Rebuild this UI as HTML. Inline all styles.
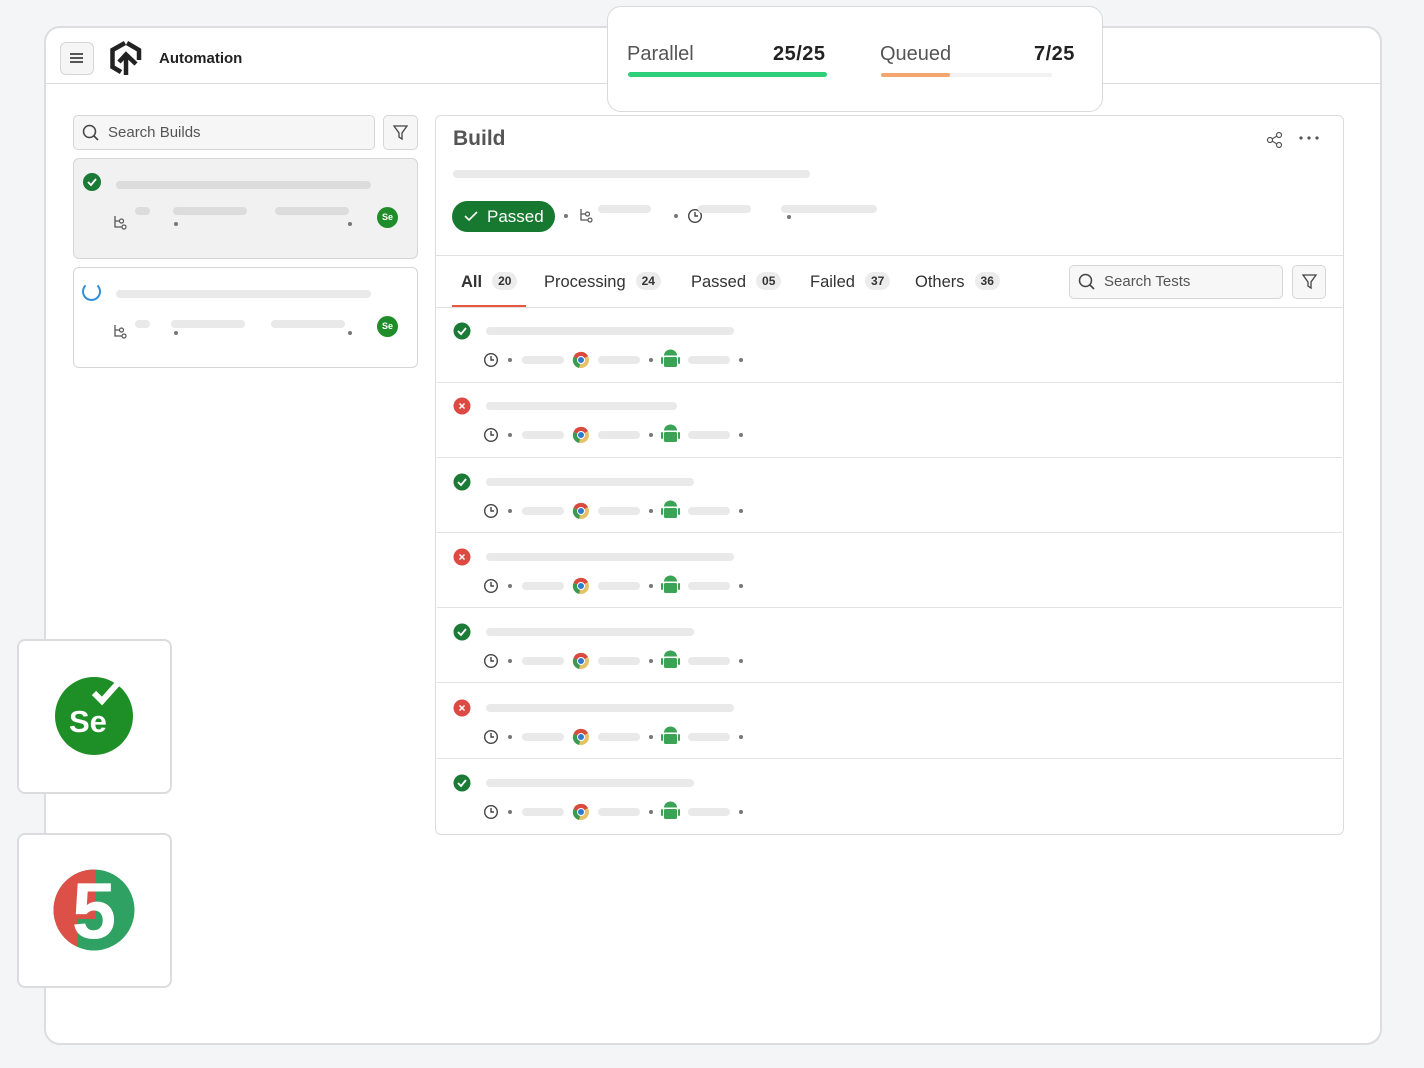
<!DOCTYPE html>
<html><head><meta charset="utf-8"><style>
*{box-sizing:border-box;margin:0;padding:0}
body{width:1424px;height:1068px;background:#f4f5f6;font-family:"Liberation Sans",sans-serif;position:relative;overflow:hidden}
.a{position:absolute}
.bar{position:absolute;height:8px;border-radius:4px;background:#e9e9ea}
.dot{position:absolute;width:4px;height:4px;border-radius:50%;background:#777}
.card{position:absolute;background:#fff;border:2px solid #dcdcde;border-radius:8px}
.row{position:absolute;left:0;width:905px;height:75px;border-bottom:1.5px solid #e3e3e4}
.cnt{display:inline-block;background:#ececec;border-radius:10px;font-size:12px;font-weight:bold;color:#333;padding:2px 6px;margin-left:10px;vertical-align:2px}
.tab{position:absolute;top:272px;font-size:16.5px;color:#333}
</style></head><body>
<svg width="0" height="0" style="position:absolute"><defs>
<g id="br"><path d="M2 1 V12 H9 M2 6 H6" fill="none" stroke="#555" stroke-width="1.3"/><circle cx="8.5" cy="6" r="2" fill="#fff" stroke="#555" stroke-width="1.2"/><circle cx="11" cy="12" r="2" fill="#fff" stroke="#555" stroke-width="1.2"/></g>
</defs></svg>
<!-- main window -->
<div class="a" style="left:44px;top:26px;width:1338px;height:1019px;background:#fff;border:2px solid #dddde0;border-radius:16px"></div>
<div class="a" style="left:45px;top:83px;width:1336px;height:1px;background:#dcdcde"></div>
<div class="a" style="left:60px;top:42px;width:34px;height:33px;border:1px solid #d6d6d8;border-radius:6px;background:#f5f5f6"></div>
<div class="a" style="left:70px;top:53px;width:13px;height:1.5px;background:#555;box-shadow:0 4px 0 #555,0 8px 0 #555"></div>
<svg class="a" style="left:108px;top:40px" width="36" height="36" viewBox="0 0 36 36"><path d="M13 32 L4.5 27 V10 L17 3" fill="none" stroke="#222" stroke-width="4.5"/><path d="M19 3 L31 10 V20" fill="none" stroke="#222" stroke-width="4.5"/><path d="M18 35 V15 M11 22 L18 14.5 L28 24" fill="none" stroke="#222" stroke-width="4.5"/></svg>
<div class="a" style="left:159px;top:50px;font-size:15px;font-weight:bold;color:#222">Automation</div>

<!-- left -->
<div class="a" style="left:73px;top:115px;width:302px;height:35px;border:1px solid #d6d6d8;border-radius:5px;background:#f6f6f7"></div>
<svg class="a" style="left:82px;top:124px" width="18" height="18"><circle cx="7.5" cy="7.5" r="6" fill="none" stroke="#444" stroke-width="1.5"/><path d="M12 12 L16 16" stroke="#444" stroke-width="1.6"/></svg>
<div class="a" style="left:108px;top:124px;font-size:15px;color:#555">Search Builds</div>
<div class="a" style="left:383px;top:115px;width:35px;height:35px;border:1px solid #d6d6d8;border-radius:5px;background:#f6f6f7"></div>
<svg class="a" style="left:392px;top:124px" width="17" height="17"><path d="M2 2 H15 L10 9 V15 L7 13 V9 Z" fill="none" stroke="#444" stroke-width="1.3"/></svg>

<div class="a" style="left:73px;top:158px;width:345px;height:101px;border:1px solid #d6d6d8;border-radius:6px;background:#f1f1f2"></div>
<svg class="a" style="left:83px;top:173px" width="18" height="18"><circle cx="9" cy="9" r="9" fill="#1a7a36"/><path d="M5 9 L8 12 L13 6" fill="none" stroke="#fff" stroke-width="1.8"/></svg>
<div class="bar" style="left:116px;top:181px;width:255px;background:#dcdcdc"></div>
<div class="bar" style="left:135px;top:207px;width:15px;background:#dcdcdc"></div>
<div class="bar" style="left:173px;top:207px;width:74px;background:#dcdcdc"></div>
<div class="bar" style="left:275px;top:207px;width:74px;background:#dcdcdc"></div>
<div class="dot" style="left:174px;top:222px"></div><div class="dot" style="left:348px;top:222px"></div>
<svg class="a" style="left:113px;top:215px" width="15" height="16"><use href="#br"/></svg>
<div class="a" style="left:377px;top:207px;width:21px;height:21px;border-radius:50%;background:#1f8d2a;color:#fff;font-size:9px;font-weight:bold;text-align:center;line-height:21px">Se</div>

<div class="a" style="left:73px;top:267px;width:345px;height:101px;border:1px solid #d6d6d8;border-radius:6px;background:#fff"></div>
<div class="a" style="left:82px;top:282px;width:19px;height:19px;border-radius:50%;border:2px solid #2f8fd8;border-top-color:transparent"></div>
<div class="bar" style="left:116px;top:290px;width:255px"></div>
<div class="bar" style="left:135px;top:320px;width:15px"></div>
<div class="bar" style="left:171px;top:320px;width:74px"></div>
<div class="bar" style="left:271px;top:320px;width:74px"></div>
<div class="dot" style="left:174px;top:331px"></div><div class="dot" style="left:348px;top:331px"></div>
<svg class="a" style="left:113px;top:324px" width="15" height="16"><use href="#br"/></svg>
<div class="a" style="left:377px;top:316px;width:21px;height:21px;border-radius:50%;background:#1f8d2a;color:#fff;font-size:9px;font-weight:bold;text-align:center;line-height:21px">Se</div>

<!-- build panel -->
<div class="a" style="left:435px;top:115px;width:909px;height:720px;border:1.5px solid #dcdcde;border-radius:6px;background:#fff"></div>
<div class="a" style="left:453px;top:127px;font-size:21px;font-weight:bold;color:#555">Build</div>
<svg class="a" style="left:1266px;top:131px" width="18" height="18"><circle cx="4" cy="9" r="2.5" fill="none" stroke="#555" stroke-width="1.2"/><circle cx="13" cy="4" r="2.5" fill="none" stroke="#555" stroke-width="1.2"/><circle cx="13" cy="14" r="2.5" fill="none" stroke="#555" stroke-width="1.2"/><path d="M6 8 L11 5 M6 10 L11 13" stroke="#555" stroke-width="1.2"/></svg>
<svg class="a" style="left:1298px;top:134px" width="22" height="8"><circle cx="3" cy="4" r="1.6" fill="#555"/><circle cx="11" cy="4" r="1.6" fill="#555"/><circle cx="19" cy="4" r="1.6" fill="#555"/></svg>
<div class="bar" style="left:453px;top:170px;width:357px"></div>
<div class="a" style="left:452px;top:201px;width:103px;height:31px;border-radius:16px;background:#17782f;color:#fff;font-size:17px;line-height:31px;padding-left:35px">Passed</div>
<svg class="a" style="left:463px;top:209px" width="16" height="14"><path d="M2 7 L6 11 L14 3" fill="none" stroke="#fff" stroke-width="1.6"/></svg>
<div class="dot" style="left:564px;top:214px"></div>
<svg class="a" style="left:579px;top:208px" width="15" height="16"><use href="#br"/></svg>
<div class="bar" style="left:598px;top:205px;width:53px"></div>
<div class="dot" style="left:674px;top:214px"></div>
<svg class="a" style="left:687px;top:208px" width="16" height="16"><circle cx="8" cy="8" r="6.3" fill="none" stroke="#444" stroke-width="1.4"/><path d="M8 4 V8 H11" fill="none" stroke="#444" stroke-width="1.4"/></svg>
<div class="bar" style="left:698px;top:205px;width:53px"></div>
<div class="bar" style="left:781px;top:205px;width:96px"></div>
<div class="dot" style="left:787px;top:215px"></div>
<div class="a" style="left:436px;top:255px;width:907px;height:1px;background:#e0e0e2"></div>
<div class="a" style="left:436px;top:307px;width:907px;height:1px;background:#e0e0e2"></div>
<div class="a" style="left:452px;top:305px;width:74px;height:2px;background:#e8563f"></div>
<div class="tab" style="left:461px;font-weight:bold">All<span class="cnt">20</span></div>
<div class="tab" style="left:544px">Processing<span class="cnt">24</span></div>
<div class="tab" style="left:691px">Passed<span class="cnt">05</span></div>
<div class="tab" style="left:810px">Failed<span class="cnt">37</span></div>
<div class="tab" style="left:915px">Others<span class="cnt">36</span></div>
<div class="a" style="left:1069px;top:265px;width:214px;height:34px;border:1px solid #d6d6d8;border-radius:5px;background:#f7f7f8"></div>
<svg class="a" style="left:1078px;top:273px" width="18" height="18"><circle cx="7.5" cy="7.5" r="6" fill="none" stroke="#444" stroke-width="1.5"/><path d="M12 12 L16 16" stroke="#444" stroke-width="1.6"/></svg>
<div class="a" style="left:1104px;top:273px;font-size:15px;color:#555">Search Tests</div>
<div class="a" style="left:1292px;top:265px;width:34px;height:34px;border:1px solid #d6d6d8;border-radius:5px;background:#f7f7f8"></div>
<svg class="a" style="left:1301px;top:273px" width="17" height="17"><path d="M2 2 H15 L10 9 V15 L7 13 V9 Z" fill="none" stroke="#444" stroke-width="1.3"/></svg>

<div class="a" style="left:437px;top:308px">
<div class="row" style="top:0"></div><div class="row" style="top:75px"></div><div class="row" style="top:150px"></div><div class="row" style="top:225px"></div><div class="row" style="top:300px"></div><div class="row" style="top:376px"></div><div class="row" style="top:451px;border:none"></div>
</div>
<svg class="a" style="left:436px;top:308px" width="340" height="526">
<defs>
<g id="ok"><circle r="8.5" fill="#1a7a36"/><path d="M-4 0 L-1 3 L4 -3" fill="none" stroke="#fff" stroke-width="1.8"/></g>
<g id="ko"><circle r="8.5" fill="#dd4a43"/><path d="M-2.5 -2.5 L2.5 2.5 M2.5 -2.5 L-2.5 2.5" stroke="#fff" stroke-width="1.5"/></g>
<g id="meta">
<circle cx="55" cy="52" r="6.3" fill="none" stroke="#444" stroke-width="1.4"/><path d="M55 48 V52 H58" fill="none" stroke="#444" stroke-width="1.4"/>
<circle cx="74" cy="52" r="2" fill="#777"/>
<rect x="86" y="48" width="42" height="8" rx="4" fill="#e9e9ea"/>
<circle cx="145" cy="52" r="8" fill="#e5c26a"/><path d="M145 52 L137.5 49 A8 8 0 0 1 152 48 Z" fill="#d8493e"/><path d="M145 52 L137.5 49 A8 8 0 0 0 143 60 Z" fill="#3c9a4f"/><circle cx="145" cy="52" r="3.5" fill="#2e7ad1" stroke="#fff"/>
<rect x="162" y="48" width="42" height="8" rx="4" fill="#e9e9ea"/>
<circle cx="215" cy="52" r="2" fill="#777"/>
<rect x="228" y="49" width="13" height="10" rx="1.5" fill="#3aa356"/><path d="M228 47.5 A6.5 6 0 0 1 241 47.5 Z" fill="#3aa356"/><rect x="225" y="49" width="2" height="7" rx="1" fill="#3aa356"/><rect x="242" y="49" width="2" height="7" rx="1" fill="#3aa356"/>
<rect x="252" y="48" width="42" height="8" rx="4" fill="#e9e9ea"/>
<circle cx="305" cy="52" r="2" fill="#777"/>
</g>
</defs>
<g transform="translate(0,0)"><use href="#ok" x="26" y="23"/><rect x="50" y="19" width="248" height="8" rx="4" fill="#e9e9ea"/><use href="#meta"/></g>
<g transform="translate(0,75)"><use href="#ko" x="26" y="23"/><rect x="50" y="19" width="191" height="8" rx="4" fill="#e9e9ea"/><use href="#meta"/></g>
<g transform="translate(0,151)"><use href="#ok" x="26" y="23"/><rect x="50" y="19" width="208" height="8" rx="4" fill="#e9e9ea"/><use href="#meta"/></g>
<g transform="translate(0,226)"><use href="#ko" x="26" y="23"/><rect x="50" y="19" width="248" height="8" rx="4" fill="#e9e9ea"/><use href="#meta"/></g>
<g transform="translate(0,301)"><use href="#ok" x="26" y="23"/><rect x="50" y="19" width="208" height="8" rx="4" fill="#e9e9ea"/><use href="#meta"/></g>
<g transform="translate(0,377)"><use href="#ko" x="26" y="23"/><rect x="50" y="19" width="248" height="8" rx="4" fill="#e9e9ea"/><use href="#meta"/></g>
<g transform="translate(0,452)"><use href="#ok" x="26" y="23"/><rect x="50" y="19" width="208" height="8" rx="4" fill="#e9e9ea"/><use href="#meta"/></g>
</svg>

<!-- parallel popup -->
<div class="a" style="left:607px;top:6px;width:496px;height:106px;background:#fff;border:1.5px solid #d9d9dc;border-radius:14px"></div>
<div class="a" style="left:627px;top:43px;font-size:20px;color:#555">Parallel</div>
<div class="a" style="left:773px;top:43px;font-size:20px;color:#222;font-weight:bold;letter-spacing:0.5px">25/25</div>
<div class="a" style="left:628px;top:72px;width:199px;height:5px;border-radius:3px;background:#2dcf78"></div>
<div class="a" style="left:880px;top:43px;font-size:20px;color:#555">Queued</div>
<div class="a" style="left:1034px;top:43px;font-size:20px;color:#222;font-weight:bold;letter-spacing:0.5px">7/25</div>
<div class="a" style="left:881px;top:73px;width:171px;height:4px;border-radius:2px;background:#f2f2f2"></div>
<div class="a" style="left:881px;top:73px;width:69px;height:4px;border-radius:2px;background:#f4a46e"></div>

<!-- side logos -->
<div class="card" style="left:17px;top:639px;width:155px;height:155px;border-radius:8px"></div>
<svg class="a" style="left:54px;top:676px" width="82" height="82" viewBox="0 0 82 82"><circle cx="40" cy="40" r="39" fill="#1e8e26"/><path d="M57 2 L76 2 L76 20 Z" fill="#fff"/><path d="M40 17 L48 25 L65 6" fill="none" stroke="#fff" stroke-width="6"/><text x="15" y="56" font-family="Liberation Sans" font-weight="bold" font-size="31" fill="#fff">Se</text></svg>
<div class="card" style="left:17px;top:833px;width:155px;height:155px;border-radius:8px"></div>
<svg class="a" style="left:53px;top:869px" width="82" height="82" viewBox="0 0 82 82"><defs><clipPath id="cc"><circle cx="41" cy="41" r="40.5"/></clipPath></defs><g clip-path="url(#cc)"><rect width="82" height="82" fill="#2fa163"/><path d="M0 0 H42 V50 H25 V82 H0 Z" fill="#dc5047"/></g><text x="41" y="69" text-anchor="middle" font-family="Liberation Sans" font-weight="bold" font-size="80" fill="#fff">5</text></svg>
</body></html>
